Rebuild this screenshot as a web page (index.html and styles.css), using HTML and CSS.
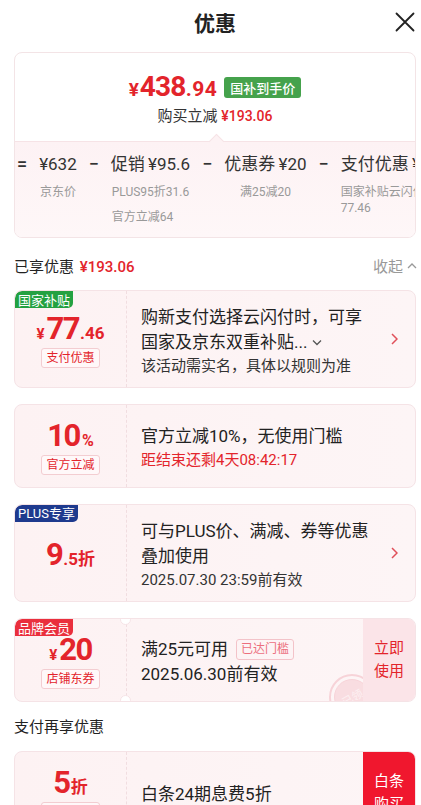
FILE: index.html
```html
<!DOCTYPE html>
<html lang="zh-CN">
<head>
<meta charset="utf-8">
<title>优惠</title>
<link rel="stylesheet" href="styles.css">
</head>
<body>
<div class="page">
  <header class="hdr">
    <h1 class="hdr-title">优惠</h1>
    <svg class="close" viewBox="0 0 20 20" width="20" height="20"><path d="M1.5 1.5L18.5 18.5M18.5 1.5L1.5 18.5" stroke="#222" stroke-width="1.8" fill="none" stroke-linecap="round"/></svg>
  </header>

  <section class="summary">
    <div class="sum-top">
      <div class="total">
        <span class="t-yen">¥</span><span class="t-int">438</span><span class="t-dec">.94</span>
        <span class="t-tag">国补到手价</span>
      </div>
      <div class="save">购买立减 <span class="save-red">¥193.06</span></div>
    </div>
    <div class="sum-bot">
      <div class="calc">
        <div class="op">=</div>
        <div class="col">
          <div class="main">¥632</div>
          <div class="sub">京东价</div>
        </div>
        <div class="op">−</div>
        <div class="col">
          <div class="main">促销 ¥95.6</div>
          <div class="subs">
            <div class="sub">PLUS95折31.6</div>
            <div class="sub sub-gap">官方立减64</div>
          </div>
        </div>
        <div class="op">−</div>
        <div class="col">
          <div class="main">优惠券 ¥20</div>
          <div class="sub">满25减20</div>
        </div>
        <div class="op">−</div>
        <div class="col col-left">
          <div class="main">支付优惠 ¥77.46</div>
          <div class="sub">国家补贴云闪付<br>77.46</div>
        </div>
      </div>
    </div>
  </section>

  <div class="enjoy">
    <div class="enjoy-l">已享优惠 <span class="enjoy-red">¥193.06</span></div>
    <div class="fold">收起
      <svg width="10" height="7" viewBox="0 0 10 7"><path d="M1 6l4-4 4 4" stroke="#999" stroke-width="1.3" fill="none"/></svg>
    </div>
  </div>

  <div class="cpn h98 first">
    <span class="badge badge-green">国家补贴</span>
    <div class="cpn-left">
      <div class="amt"><span class="a-yen">¥</span><span class="a-int">77</span><span class="a-dec">.46</span></div>
      <div class="ltag">支付优惠</div>
    </div>
    <div class="cpn-body">
      <div class="l1">购新支付选择云闪付时，可享</div>
      <div class="l1">国家及京东双重补贴... <svg class="dn" width="10" height="7" viewBox="0 0 10 7"><path d="M1 1.5l4 4 4-4" stroke="#555" stroke-width="1.3" fill="none"/></svg></div>
      <div class="l2">该活动需实名，具体以规则为准</div>
    </div>
    <svg class="arrow" width="7" height="12" viewBox="0 0 7 12"><path d="M1 1l5 5-5 5" stroke="#e0505a" stroke-width="1.5" fill="none"/></svg>
  </div>

  <div class="cpn h84">
    <div class="cpn-left">
      <div class="amt"><span class="a-int">10</span><span class="a-pct">%</span></div>
      <div class="ltag">官方立减</div>
    </div>
    <div class="cpn-body">
      <div class="l1">官方立减10%，无使用门槛</div>
      <div class="l2 red">距结束还剩4天08:42:17</div>
    </div>
  </div>

  <div class="cpn h98">
    <span class="badge badge-navy">PLUS专享</span>
    <div class="cpn-left">
      <div class="amt"><span class="a-int">9</span><span class="a-dec">.5折</span></div>
    </div>
    <div class="cpn-body">
      <div class="l1">可与PLUS价、满减、券等优惠</div>
      <div class="l1">叠加使用</div>
      <div class="l2">2025.07.30 23:59前有效</div>
    </div>
    <svg class="arrow" width="7" height="12" viewBox="0 0 7 12"><path d="M1 1l5 5-5 5" stroke="#e0505a" stroke-width="1.5" fill="none"/></svg>
  </div>

  <div class="cpn h84 ticket">
    <span class="badge badge-red">品牌会员</span>
    <div class="cpn-left">
      <div class="amt"><span class="a-yen">¥</span><span class="a-int">20</span></div>
      <div class="ltag">店铺东券</div>
    </div>
    <div class="cpn-body">
      <div class="l1">满25元可用 <span class="reach">已达门槛</span></div>
      <div class="l1">2025.06.30前有效</div>
    </div>
    <div class="stamp"><span>已领</span></div>
    <div class="cpn-btn">立即<br>使用</div>
  </div>

  <div class="sec-title">支付再享优惠</div>

  <div class="cpn h84 last">
    <div class="cpn-left">
      <div class="amt"><span class="a-int">5</span><span class="a-dec">折</span></div>
      <div class="ltag">白条分期</div>
    </div>
    <div class="cpn-body">
      <div class="l1">白条24期息费5折</div>
    </div>
    <div class="cpn-btn btn-red">白条<br>购买</div>
  </div>
</div>
</body>
</html>
```

FILE: styles.css
```css
* { box-sizing: border-box; margin: 0; padding: 0; }
html, body { background: #fff; }
body {
  width: 421px;
  font-family: Roboto, "Noto Sans CJK SC", sans-serif;
  color: #222;
  overflow: hidden;
}
.page { padding: 0 5px 40px 14px; }

/* header */
.hdr {
  height: 44px;
  display: flex;
  align-items: center;
  justify-content: center;
  position: relative;
}
.hdr-title {
  font-family: "Noto Sans CJK SC", sans-serif;
  font-size: 21px;
  font-weight: 700;
  color: #222;
}
.close { position: absolute; right: 1px; top: 12px; }

/* summary card */
.summary {
  margin-top: 8px;
  border: 1px solid #f3e4e6;
  border-radius: 8px;
  overflow: hidden;
  background: #fff;
}
.sum-top {
  padding: 19px 0 15px;
  display: flex;
  flex-direction: column;
  align-items: center;
}
.total {
  display: flex;
  align-items: baseline;
  height: 30px;
  line-height: 30px;
  color: #e3242b;
  font-weight: 700;
}
.t-yen { font-size: 19px; margin-right: 1px; }
.t-int { font-size: 28px; letter-spacing: -0.8px; }
.t-dec { font-size: 21px; letter-spacing: 0.5px; }
.t-tag {
  align-self: center;
  margin-left: 7px;
  height: 21px;
  line-height: 21px;
  padding: 0 6px;
  border-radius: 3px;
  background: #45a24c;
  color: #fff;
  font-size: 13px;
  font-weight: 500;
  font-family: "Noto Sans CJK SC", sans-serif;
}
.save {
  margin-top: 4px;
  font-size: 15px;
  line-height: 20px;
  color: #333;
}
.save-red { color: #e3242b; font-size: 14px; font-weight: 500; }

.sum-bot {
  position: relative;
  background: linear-gradient(180deg, #fdf2f4 0%, #fef7f8 100%);
  border-top: 1px solid #f6e3e6;
  padding: 10px 0 12px 2px;
}
.sum-bot::before {
  content: "";
  position: absolute;
  left: 196px;
  top: -6px;
  width: 10px;
  height: 10px;
  background: #fdf2f4;
  border-top: 1px solid #f6e3e6;
  border-left: 1px solid #f6e3e6;
  transform: rotate(45deg);
}
.calc {
  display: flex;
  gap: 12px;
  white-space: nowrap;
}
.op {
  flex-shrink: 0;
  font-size: 18px;
  line-height: 24px;
  font-weight: 500;
  color: #333;
}
.col {
  flex-shrink: 0;
  display: flex;
  flex-direction: column;
  align-items: center;
}
.col-left { align-items: flex-start; }
.main {
  font-size: 17px;
  line-height: 24px;
  font-weight: 400;
  color: #333;
  word-spacing: -1px;
}
.sub, .subs {
  margin-top: 8px;
  font-size: 12px;
  line-height: 16px;
  color: #999;
  text-align: left;
}
.subs .sub { margin-top: 0; }
.subs .sub-gap { margin-top: 9px; }

/* enjoyed row */
.enjoy {
  margin-top: 15px;
  height: 24px;
  display: flex;
  align-items: center;
  justify-content: space-between;
}
.enjoy-l { font-size: 15px; color: #222; }
.enjoy-red { color: #e3242b; font-weight: 500; margin-left: 2px; }
.fold {
  display: flex;
  align-items: center;
  gap: 4px;
  font-size: 15px;
  color: #999;
  margin-right: -1px;
}

/* coupon cards */
.cpn {
  position: relative;
  display: flex;
  align-items: stretch;
  margin-top: 16px;
  background: linear-gradient(90deg, #fdf2f3 0%, #fdf5f6 100%);
  border: 1px solid #f5e3e6;
  border-radius: 8px;
  overflow: hidden;
}
.cpn.first { margin-top: 13px; }
.h98 { height: 98px; }
.h84 { height: 84px; }

.badge {
  position: absolute;
  top: 0;
  left: 0;
  z-index: 2;
  height: 17px;
  line-height: 17px;
  padding: 0 3px;
  border-radius: 7px 0 5px 0;
  color: #fff;
  font-size: 13px;
  font-family: "Noto Sans CJK SC", sans-serif;
}
.badge-green { background: #24a141; }
.badge-navy { background: #1e3a8e; font-family: Roboto, "Noto Sans CJK SC", sans-serif; padding: 0 3px; }
.badge-red { background: #ea2f3d; }

.cpn-left {
  position: relative;
  width: 112px;
  flex-shrink: 0;
  display: flex;
  flex-direction: column;
  align-items: center;
  justify-content: center;
  padding-top: 3px;
  border-right: 1px dashed #f1dde0;
}
.amt {
  display: flex;
  align-items: baseline;
  height: 32px;
  line-height: 32px;
  color: #e3242b;
  font-weight: 700;
}
.a-yen { font-size: 15px; margin-right: 2px; }
.a-int { font-size: 31px; letter-spacing: -1.5px; }
.a-dec { font-size: 17px; margin-left: 1px; }
.a-pct { font-size: 16px; margin-left: 2px; }
.ltag {
  margin-top: 3px;
  height: 20px;
  line-height: 18px;
  padding: 0 4px;
  font-size: 12px;
  color: #e3242b;
  background: #fff8f9;
  border: 1px solid #f3cdd1;
  border-radius: 3px;
}

.cpn-body {
  flex: 1;
  min-width: 0;
  display: flex;
  flex-direction: column;
  justify-content: center;
  padding: 3px 0 0 14px;
  white-space: nowrap;
}
.l1 {
  font-size: 17px;
  line-height: 25px;
  color: #222;
  display: flex;
  align-items: center;
}
.l2 {
  font-size: 15px;
  line-height: 22px;
  color: #333;
}
.l2.red { color: #e3242b; }
.dn { margin-left: 5px; }
.arrow { align-self: center; margin-right: 17px; flex-shrink: 0; }

.reach {
  margin-left: 8px;
  height: 21px;
  line-height: 19px;
  padding: 0 4px;
  font-size: 12px;
  color: #ec6f7d;
  border: 1px solid #f3c3c9;
  border-radius: 3px;
}

.ticket .cpn-left::before,
.ticket .cpn-left::after {
  content: "";
  position: absolute;
  right: -5px;
  width: 9px;
  height: 9px;
  border-radius: 50%;
  background: #fff;
  border: 1px solid #f5e3e6;
}
.ticket .cpn-left::before { top: -5px; }
.ticket .cpn-left::after { bottom: -5px; }

.cpn-btn {
  width: 52px;
  flex-shrink: 0;
  display: flex;
  align-items: center;
  justify-content: center;
  text-align: center;
  font-size: 15px;
  line-height: 23px;
  color: #e3242b;
  background: #fbe4e8;
  position: relative;
  z-index: 1;
}
.btn-red { background: #f0172e; color: #fff; }

.stamp {
  position: absolute;
  right: 40px;
  top: 55px;
  width: 46px;
  height: 46px;
  border-radius: 50%;
  border: 2px solid #f7d3d8;
  display: flex;
  align-items: center;
  justify-content: center;
  z-index: 0;
}
.stamp::before {
  content: "";
  position: absolute;
  inset: 3px;
  border-radius: 50%;
  border: 1px solid #f7d3d8;
  background: #f9dde1;
}
.stamp span {
  position: relative;
  font-size: 11px;
  color: #fdf0f2;
  transform: rotate(-30deg);
}

.sec-title {
  margin-top: 14px;
  font-size: 15px;
  line-height: 22px;
  color: #222;
}
.cpn.last { margin-top: 13px; }
```
